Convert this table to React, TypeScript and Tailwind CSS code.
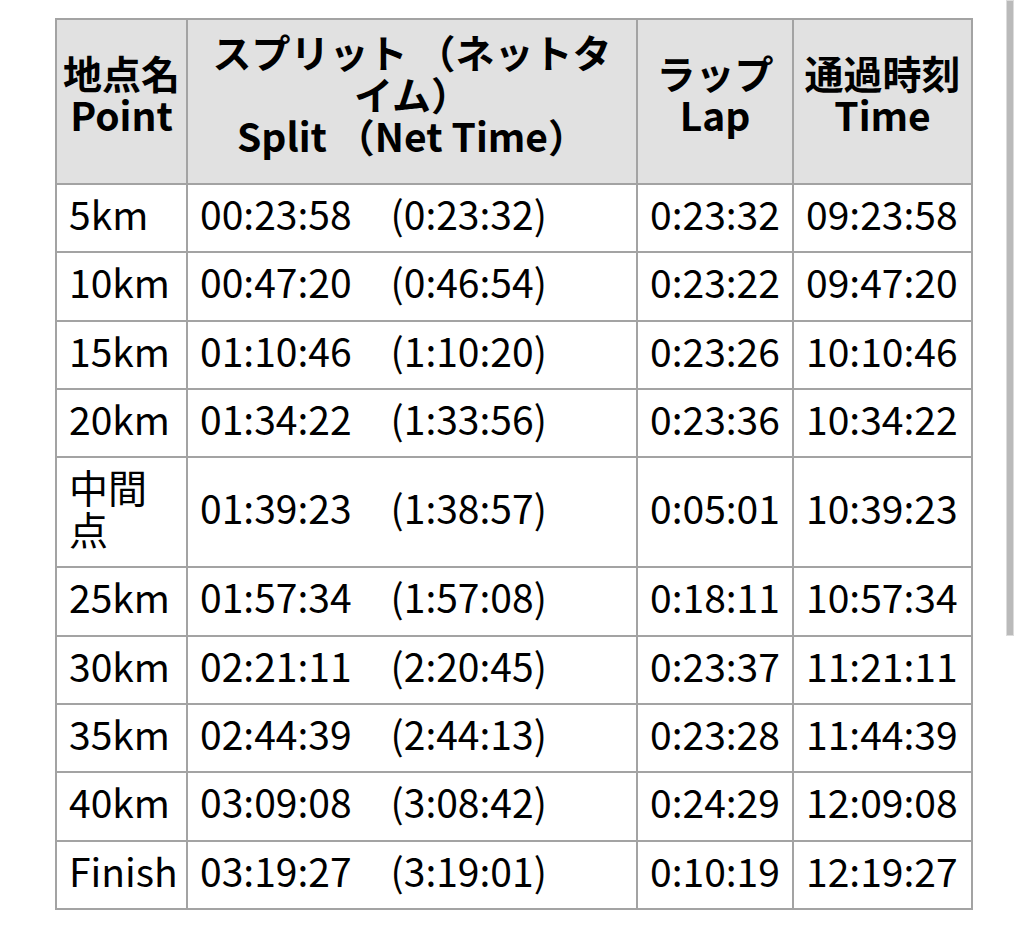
const rows: [string, string, string, string][] = [
  ['5km', '00:23:58　(0:23:32)', '0:23:32', '09:23:58'],
  ['10km', '00:47:20　(0:46:54)', '0:23:22', '09:47:20'],
  ['15km', '01:10:46　(1:10:20)', '0:23:26', '10:10:46'],
  ['20km', '01:34:22　(1:33:56)', '0:23:36', '10:34:22'],
  ['中間点', '01:39:23　(1:38:57)', '0:05:01', '10:39:23'],
  ['25km', '01:57:34　(1:57:08)', '0:18:11', '10:57:34'],
  ['30km', '02:21:11　(2:20:45)', '0:23:37', '11:21:11'],
  ['35km', '02:44:39　(2:44:13)', '0:23:28', '11:44:39'],
  ['40km', '03:09:08　(3:08:42)', '0:24:29', '12:09:08'],
  ['Finish', '03:19:27　(3:19:01)', '0:10:19', '12:19:27'],
]

export default function App() {
  const th = 'border-2 border-[#a3a3a3] bg-[#e1e1e1] px-1 pt-[10px] pb-[27px] text-center align-middle font-bold'
  const td = 'border-2 border-[#a3a3a3] px-3 pt-[7px] pb-[17.3px] text-left align-middle'

  return (
    <main
      className="relative min-h-[927px] w-[1024px] bg-white text-black"
      style={{ fontFamily: '"Noto Sans CJK JP", "Noto Sans", sans-serif' }}
    >
      <div className="pl-[55px] pt-[18px]">
        <table className="w-[916px] table-fixed border-collapse text-[39px] leading-[42px]">
          <colgroup>
            <col className="w-[131px]" />
            <col className="w-[450px]" />
            <col className="w-[156px]" />
            <col className="w-[179px]" />
          </colgroup>
          <thead>
            <tr>
              <th className={th}>
                地点名
                <br />
                Point
              </th>
              <th className={th}>
                スプリット （ネットタ
                <br />
                イム）
                <br />
                Split （Net Time）
              </th>
              <th className={th}>
                ラップ
                <br />
                Lap
              </th>
              <th className={th}>
                通過時刻
                <br />
                Time
              </th>
            </tr>
          </thead>
          <tbody>
            {rows.map((r) => (
              <tr key={r[0]}>
                <td className={td}>{r[0]}</td>
                <td className={`${td} whitespace-pre`}>{r[1]}</td>
                <td className={`${td} whitespace-nowrap`}>{r[2]}</td>
                <td className={`${td} whitespace-nowrap`}>{r[3]}</td>
              </tr>
            ))}
          </tbody>
        </table>
      </div>

      {/* scroll indicator */}
      <div className="absolute left-[1006px] top-0 h-[636px] w-[8px] border border-[#dcdcdc] bg-[#bababa]" />
    </main>
  )
}
